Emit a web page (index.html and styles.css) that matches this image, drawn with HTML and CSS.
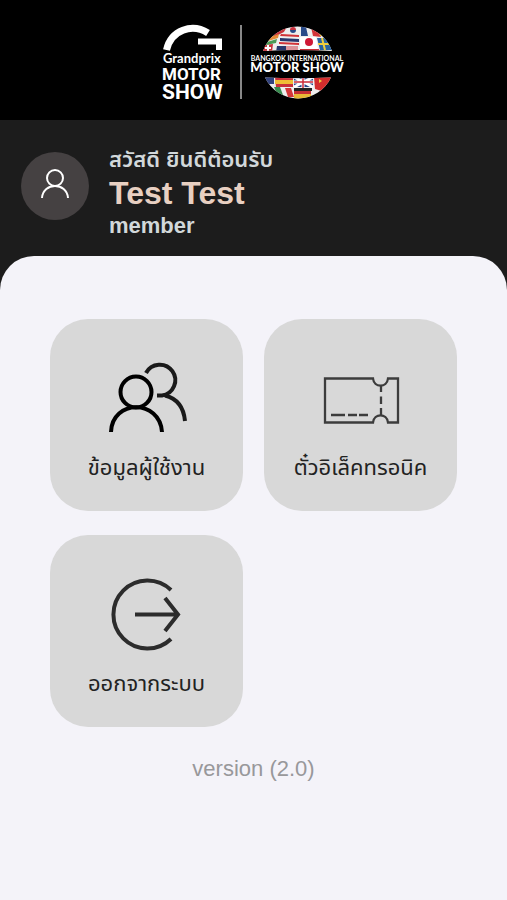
FILE: index.html
```html
<!DOCTYPE html>
<html lang="th">
<head>
<meta charset="utf-8">
<meta name="viewport" content="width=device-width, initial-scale=1">
<title>Motor Show</title>
<link rel="stylesheet" href="styles.css">
</head>
<body>
<header class="brand">
  <svg class="brand-logo" viewBox="162 20 184 84" role="img" aria-label="Grandprix Motor Show, Bangkok International Motor Show">
    <path d="M166.500 50C171 30 192 23 208 33" fill="none" stroke="#fff" stroke-width="7"/>
    <path d="M198 41.500H219V50" fill="none" stroke="#fff" stroke-width="6"/>
    <text class="logo-grandprix" x="163" y="63">Grandprix</text>
    <text class="logo-motor" x="162" y="80">MOTOR</text>
    <text class="logo-show" x="162" y="99">SHOW</text>
    <path d="M241 25V99" stroke="#888" stroke-width="2"/>
    <clipPath id="globe"><path d="M263 51A36.500 36.500 0 0 1 332 51Q297 49 263 51ZM265 77.500A36.500 36.500 0 0 0 331 77.500Q297 79 265 77.500Z"/></clipPath>
    <g clip-path="url(#globe)">
      <path fill="#eee" d="M260 24h76v78h-76z"/>
      <path fill="#c8343c" d="M264 45l9-1-1 8h-10zM274 32l14-7-4 7-10 5z"/>
      <path fill="#fff" d="M265 47h6v2h-6zM267 45h2v6h-2z"/>
      <path fill="#e58b36" d="M270 37l9-3-1 4-10 3z"/>
      <path fill="#4b9a55" d="M267 42l10-3-1 4-10 2z"/>
      <path fill="#c9323f" d="M290 30a3 3 0 0 1 6 0z"/>
      <path fill="#294a88" d="M290 30a3 3 0 0 0 6 0zM301 26l5 1 2 9h-7z"/>
      <path fill="#d23439" d="M311 27l7 4 3 6-8-1z"/>
      <path fill="#e9c13d" d="M319 31l5 5-4 0z"/>
      <path fill="#d23439" d="M281 34l18 1v2l-19-1zM279 42l20 1v2l-20-1z"/>
      <path fill="#27376d" d="M280 38l19 1v3l-19-1zM277 46h9v6h-10z"/>
      <path stroke="#c93b46" d="M286 47h12M286 49h12M286 51h12"/>
      <path fill="#fff" d="M300 37h16l2 12h-18z"/>
      <circle cx="309" cy="42" r="4" fill="#cf1835"/>
      <path fill="#2863a0" d="M317 38h9l7 12h-13z"/>
      <path stroke="#f0cd3c" stroke-width="2" d="M322 38l3 12M318 44h13"/>
      <path fill="#c93038" d="M300 49h19v4h-19z"/>
      <path fill="#33437d" d="M264 76h10v8h-9z"/>
      <path fill="#c9303a" d="M275 77h18v10h-17z"/>
      <path fill="#f0bd35" d="M275 80h18v4h-18z"/>
      <path fill="#2b4688" d="M294 76h19v11h-19z"/>
      <path stroke="#fff" stroke-width="3" d="M294 77l19 10M313 77l-19 10M294 82h19M303 76v12"/>
      <path stroke="#cc2c3a" stroke-width="1.500" d="M294 82h19M303 76v12"/>
      <path fill="#d42d2d" d="M314 77h18l-7 15-10-3z"/>
      <path fill="#f1cd41" d="M319 79l3 2-3 2z"/>
      <path fill="#388b50" d="M274 87h6l3 8-6-1z"/>
      <path fill="#d33739" d="M285 88h6l3 9h-6z"/>
      <path fill="#222" d="M294 88h18v3h-18z"/>
      <path fill="#c52f35" d="M294 91h17v3h-17z"/>
      <path fill="#e6b835" d="M294 94h17v5h-17z"/>
    </g>
    <text class="logo-bangkok" x="297" y="61" text-anchor="middle">BANGKOK INTERNATIONAL</text>
    <text class="logo-international" x="297" y="72" text-anchor="middle">MOTOR SHOW</text>
  </svg>
</header>

<section class="profile">
  <div class="avatar">
    <svg viewBox="0 0 32 32" aria-hidden="true"><circle cx="16" cy="8" r="8"/><path d="M3 28C4 12 28 12 29 28"/></svg>
  </div>
  <div class="profile-text">
    <p class="profile-line">สวัสดี ยินดีต้อนรับ</p>
    <h1 class="profile-name">Test Test</h1>
    <p class="profile-line">member</p>
  </div>
</section>

<main class="panel">
  <nav class="menu">
    <a class="tile" href="#profile">
      <svg class="tile-icon" viewBox="0 0 84 84" aria-hidden="true">
        <g fill="none" stroke="#000" stroke-width="4">
          <circle cx="31" cy="36" r="15.500"/>
          <path d="M6 76C7 43 55 43 57 76"/>
          <path stroke="#1a1a1a" d="M41 17A15.500 15.500 0 1 1 57 39.500H52M60 39.500Q78 44 80 65"/>
        </g>
      </svg>
      <span>ข้อมูลผู้ใช้งาน</span>
    </a>
    <a class="tile" href="#ticket">
      <svg class="tile-icon" viewBox="0 0 84 84" aria-hidden="true">
        <g fill="none" stroke="#3c3c3c" stroke-width="2.300">
          <path d="M6 22.500H54C55 32 68 32 69 22.500H79V66.500H69C68 57 55 57 54 66.500H6Z"/>
          <path d="M62 30V36M62 40.500V48M62 52V59M12 59H26M29 59H38M40 59H49"/>
        </g>
      </svg>
      <span>ตั๋วอิเล็คทรอนิค</span>
    </a>
    <a class="tile" href="#logout">
      <svg class="tile-icon" viewBox="0 0 84 84" aria-hidden="true">
        <g fill="none" stroke="#2c2c2c" stroke-width="4">
          <path d="M66 18A34 34 0 1 0 66 67"/>
          <path d="M30 42.500H73M60 26L73 42.500L60 59"/>
        </g>
      </svg>
      <span>ออกจากระบบ</span>
    </a>
  </nav>
  <p class="version">version (2.0)</p>
</main>
</body>
</html>
```

FILE: styles.css
```css
* { box-sizing: border-box; }

body {
  display: flex;
  flex-direction: column;
  min-height: 100vh;
  margin: 0;
  background: #1c1c1c;
  font-family: "Liberation Sans", "Noto Sans Thai", "Noto Sans", sans-serif;
}

p, h1 { margin: 0; }

.brand {
  display: flex;
  justify-content: center;
  padding: 20px 0 16px;
  background: #000;
}

.brand-logo { width: 184px; height: 84px; }
.brand-logo text { fill: #fff; }
.logo-grandprix { font: 700 13px Lato, sans-serif; }
.logo-motor { font: 700 17px Roboto, sans-serif; }
.logo-show { font: 700 21px Roboto, sans-serif; }
.logo-bangkok { font: 700 7px Lato, sans-serif; }
.logo-international { font: 900 13px Lato, sans-serif; }

.profile {
  display: flex;
  gap: 20px;
  padding: 25px 21px 15px;
}

.avatar {
  display: grid;
  place-items: center;
  width: 68px;
  height: 68px;
  margin-top: 7px;
  border-radius: 50%;
  background: #454142;
}

.avatar svg {
  width: 32px;
  height: 32px;
  overflow: visible;
  fill: none;
  stroke: #fff;
  stroke-width: 2;
}

.profile-line {
  color: #d2d8da;
  font-size: 22px;
  font-weight: 600;
  line-height: 30px;
}

.profile-name {
  color: #e8d0c2;
  font-size: 32px;
  font-weight: 700;
  line-height: 36px;
}

.panel {
  flex: 1;
  padding: 63px 50px 32px;
  border-radius: 34px 34px 0 0;
  background: #f4f3f9;
}

.menu {
  display: grid;
  grid-template-columns: 1fr 1fr;
  gap: 24px 21px;
}

.tile {
  display: flex;
  flex-direction: column;
  align-items: center;
  gap: 12px;
  padding: 37px 8px 27px;
  border-radius: 38px;
  background: #d8d8d8;
  color: #222;
  font-size: 22px;
  line-height: 32px;
  text-decoration: none;
  white-space: nowrap;
}

.tile-icon { width: 84px; height: 84px; }

.version {
  margin-top: 26px;
  color: #98989b;
  font-size: 22px;
  line-height: 32px;
  text-align: center;
}
```
